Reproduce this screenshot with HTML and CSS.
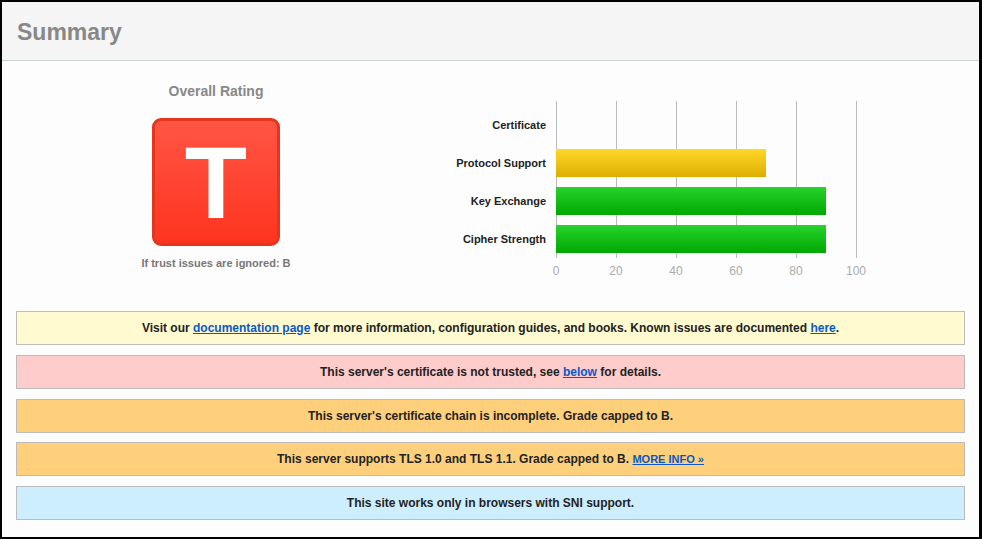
FILE: index.html
```html
<!DOCTYPE html>
<html>
<head>
<meta charset="utf-8">
<link rel="stylesheet" href="styles.css">
</head>
<body>
<div class="frame">
  <div class="header"><h1>Summary</h1></div>
  <div class="summary">
    <div class="rating">
      <div class="rating-title">Overall Rating</div>
      <div class="grade">T</div>
      <div class="rating-note">If trust issues are ignored: B</div>
    </div>
    <div class="chart">
      <div class="chart-body">
        <div class="labels">
          <div class="label">Certificate</div>
          <div class="label">Protocol Support</div>
          <div class="label">Key Exchange</div>
          <div class="label">Cipher Strength</div>
        </div>
        <div class="plot">
          <div class="row"></div>
          <div class="row"><div class="bar bar-yellow" style="width:210px"></div></div>
          <div class="row"><div class="bar bar-green" style="width:270px"></div></div>
          <div class="row"><div class="bar bar-green" style="width:270px"></div></div>
        </div>
      </div>
      <div class="axis">
        <span>0</span><span>20</span><span>40</span><span>60</span><span>80</span><span>100</span>
      </div>
    </div>
  </div>
  <div class="notices">
    <div class="notice notice-info">Visit our <a href="#">documentation page</a> for more information, configuration guides, and books. Known issues are documented <a href="#">here</a>.</div>
    <div class="notice notice-error">This server's certificate is not trusted, see <a href="#">below</a> for details.</div>
    <div class="notice notice-warn">This server's certificate chain is incomplete. Grade capped to B.</div>
    <div class="notice notice-warn">This server supports TLS 1.0 and TLS 1.1. Grade capped to B. <a href="#" class="more">MORE INFO &raquo;</a></div>
    <div class="notice notice-sni">This site works only in browsers with SNI support.</div>
  </div>
</div>
</body>
</html>
```

FILE: styles.css
```css
* { box-sizing: border-box; }
html, body { margin: 0; padding: 0; }
body {
  font-family: "Liberation Sans", Arial, sans-serif;
  background: #fff;
}
.frame {
  width: 982px;
  height: 539px;
  border: 2px solid #000;
  border-right-width: 3px;
  background: #fdfdfd;
  overflow: hidden;
}
.header {
  height: 59px;
  background: #f5f5f5;
  border-bottom: 1px solid #c5d3d3;
  display: flex;
  align-items: center;
  padding-left: 15px;
}
.header h1 {
  margin: 0;
  font-size: 23px;
  font-weight: bold;
  color: #888;
  line-height: 28px;
  padding-top: 1px;
}
.summary {
  display: flex;
  height: 250px;
}
.rating {
  width: 428px;
  display: flex;
  flex-direction: column;
  align-items: center;
  padding-top: 22px;
}
.rating-title {
  font-size: 14px;
  font-weight: bold;
  color: #888;
  line-height: 16px;
}
.grade {
  margin-top: 19px;
  width: 128px;
  height: 128px;
  border: 3px solid #e4351f;
  border-radius: 9px;
  background: linear-gradient(#ff5543, #ff3420);
  color: #fff;
  font-size: 102px;
  font-weight: bold;
  line-height: 1;
  display: flex;
  align-items: center;
  justify-content: center;
  padding-top: 2px;
}
.rating-note {
  margin-top: 10px;
  font-size: 11px;
  font-weight: bold;
  color: #777;
  line-height: 14px;
}
.chart {
  padding-top: 40px;
}
.chart-body {
  display: flex;
}
.labels {
  width: 126px;
  padding: 10px 10px 5px 0;
  display: flex;
  flex-direction: column;
  gap: 10px;
}
.label {
  height: 28px;
  display: flex;
  align-items: center;
  justify-content: flex-end;
  font-size: 11px;
  font-weight: bold;
  color: #222;
}
.plot {
  width: 301px;
  padding: 10px 0 5px 0;
  display: flex;
  flex-direction: column;
  gap: 10px;
  background-image: repeating-linear-gradient(to right, #bbb 0, #bbb 1px, transparent 1px, transparent 60px);
}
.row {
  height: 28px;
}
.bar {
  height: 28px;
}
.bar-yellow {
  background: linear-gradient(#ffd82a, #dcae00);
}
.bar-green {
  background: linear-gradient(#27d42b, #00a800);
}
.axis {
  display: flex;
  margin-left: 96px;
  margin-top: 6px;
}
.axis span {
  width: 60px;
  text-align: center;
  font-size: 12px;
  color: #aaa;
  line-height: 14px;
}
.notices {
  padding: 0 14px;
  display: flex;
  flex-direction: column;
  gap: 9.75px;
}
.notice {
  height: 34px;
  border: 1px solid #bbb;
  display: flex;
  align-items: center;
  justify-content: center;
  font-size: 12px;
  font-weight: bold;
  color: #222;
  white-space: pre;
}
.notice a {
  color: #0a58c8;
  text-decoration: underline;
}
.notice a.more {
  font-size: 11px;
}
.notice-info { background: #fffad0; }
.notice-error { background: #ffcccc; }
.notice-warn { background: #ffd07c; }
.notice-sni { background: #cdeeff; }
```
